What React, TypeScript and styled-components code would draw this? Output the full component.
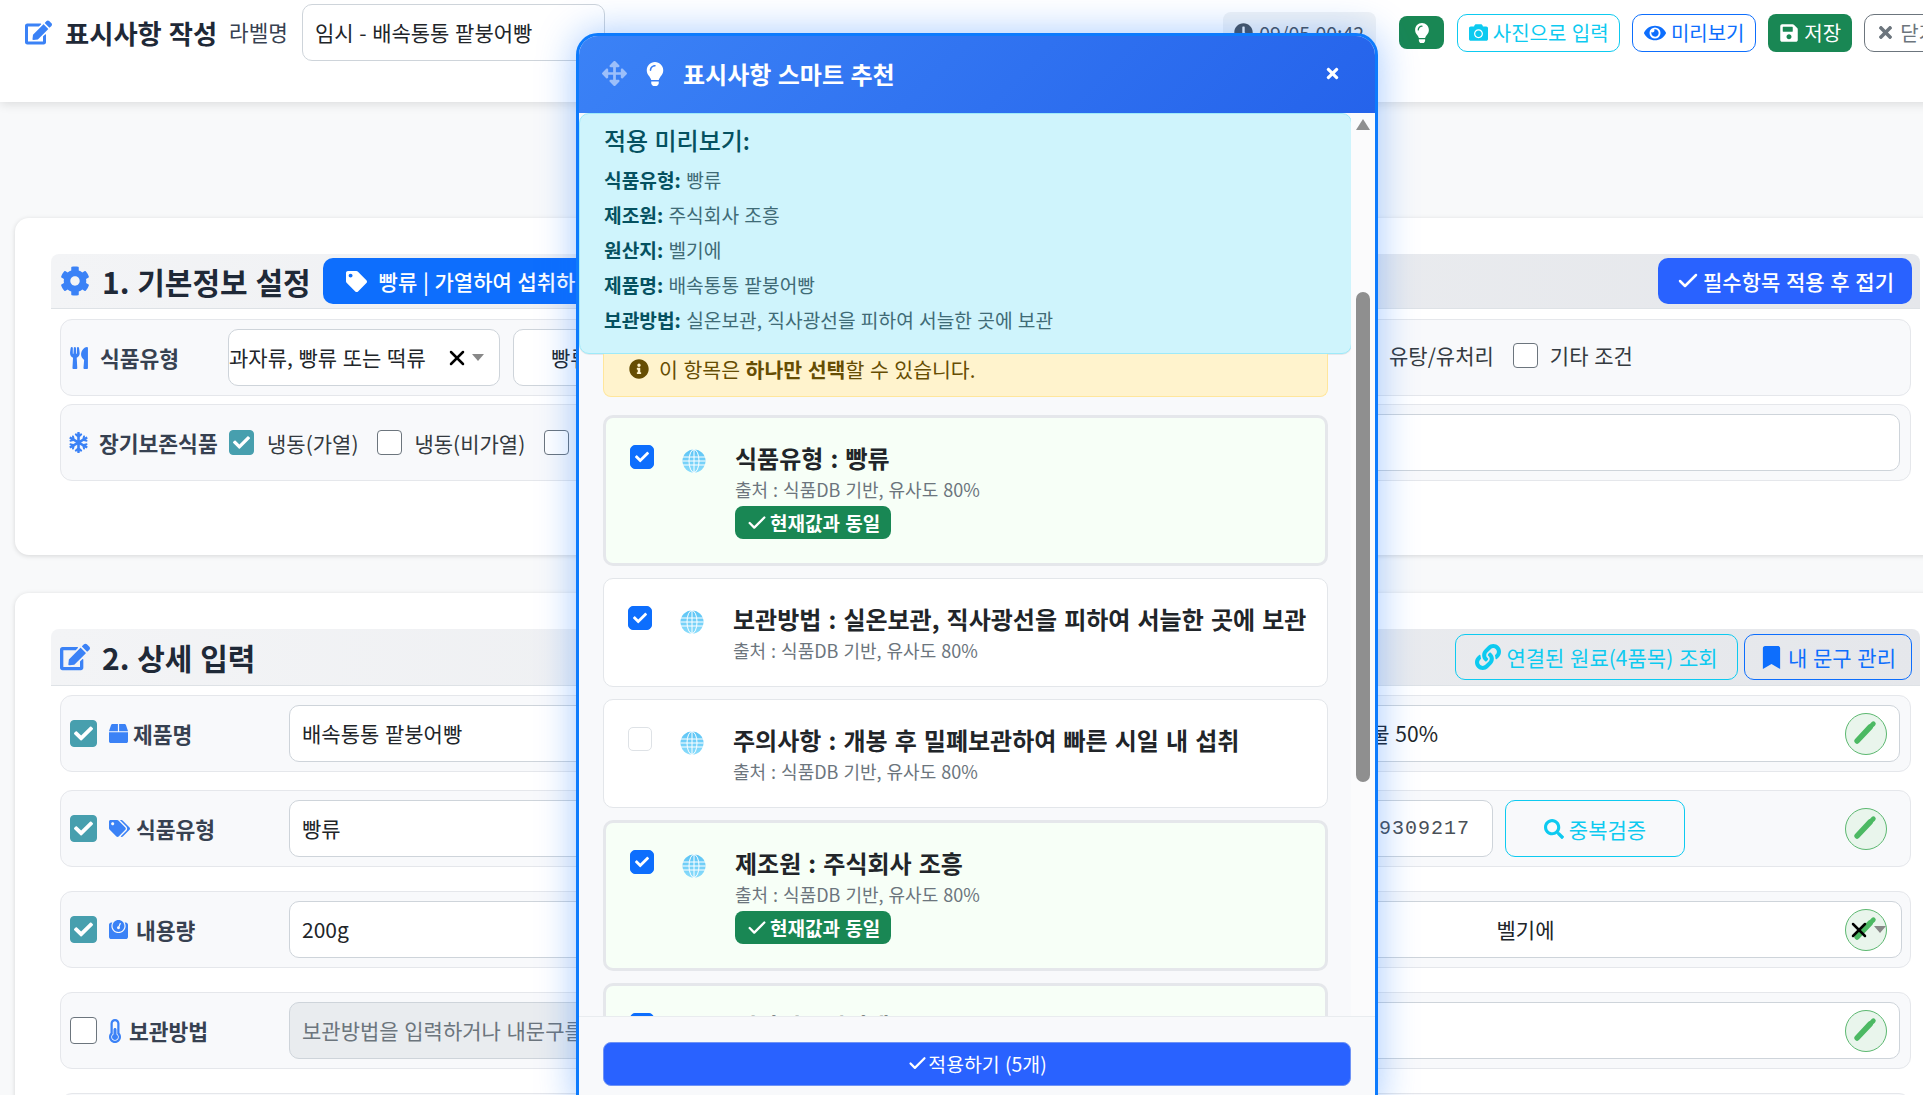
import React from 'react'
import styled, { createGlobalStyle } from 'styled-components'
import { Check as CheckMark, X } from 'lucide-react'
import {
  FaArrowsAlt, FaBookmark, FaBox, FaCamera, FaCheck, FaClock, FaCog, FaEdit, FaEye, FaInfoCircle,
  FaLightbulb, FaLink, FaSave, FaSearch, FaSnowflake, FaTag, FaTags, FaThermometerHalf, FaTimes,
  FaUtensils, FaWeight,
} from 'react-icons/fa'

const GlobalStyle = createGlobalStyle`
  html, body {
    margin: 0;
    width: 1923px;
    height: 1095px;
    overflow: hidden;
    background: #f8f9fa;
    font-family: "Noto Sans CJK KR", "Noto Sans", sans-serif;
    color: #212529;
    word-spacing: 0.06em;
  }
  button { word-spacing: inherit; }
  * { box-sizing: border-box; }
`

const Page = styled.div`
  position: relative;
  width: 1923px;
  height: 1095px;
  overflow: hidden;
`

const Header = styled.header`
  display: flex;
  align-items: flex-start;
  width: 1965px;
  height: 102px;
  padding: 4px 16px 0 25px;
  background: #fff;
  box-shadow: 0 2px 10px rgba(0, 0, 0, 0.12);
`

const PageTitle = styled.h1`
  display: flex;
  align-items: center;
  gap: 13px;
  height: 57px;
  margin: 0 12px 0 0;
  font-size: 26.3px;
  font-weight: 700;
  color: #1f2937;
  white-space: nowrap;
  svg { color: #3b82f6; font-size: 27px; }
`

const HeaderLabel = styled.span`
  height: 57px;
  line-height: 55px;
  margin-right: 14px;
  font-size: 21.3px;
  color: #374151;
`

const NameBox = styled.div`
  width: 303px;
  height: 57px;
  line-height: 55px;
  padding-left: 12px;
  border: 1px solid #ced4da;
  border-radius: 10px;
  font-size: 21px;
  background: #fff;
`

const HeaderActions = styled.div`
  display: flex;
  align-items: center;
  gap: 12px;
  margin-left: auto;
  padding-top: 9px;
`

const TimeChip = styled.div`
  display: flex;
  align-items: center;
  gap: 6px;
  width: 153px;
  height: 40px;
  margin: -1px 11px 0 0;
  padding-left: 11px;
  border-radius: 8px;
  background: #f1f3f5;
  font-size: 19.5px;
  color: #495057;
  svg { font-size: 19px; }
`

const tones: Record<string, string> = {
  info: '#0dcaf0',
  primary: '#0d6efd',
  gray: '#6c757d',
}

const OutlineButton = styled.button<{ $tone: string; $w?: number; $h?: number; $font?: number; $icon?: number }>`
  display: inline-flex;
  align-items: center;
  justify-content: center;
  gap: 5px;
  flex: none;
  width: ${p => (p.$w ? `${p.$w}px` : 'auto')};
  height: ${p => p.$h || 38}px;
  padding: 0 11px;
  border: 1px solid ${p => tones[p.$tone]};
  border-radius: 10px;
  background: transparent;
  color: ${p => tones[p.$tone]};
  font-family: inherit;
  font-size: ${p => p.$font || 20}px;
  white-space: nowrap;
  svg { font-size: ${p => p.$icon || 19}px; flex: none; }
`

const DupButton = styled(OutlineButton)`
  margin: 0 215px 0 12px;
`

const SaveButton = styled.button<{ $square?: boolean }>`
  display: inline-flex;
  align-items: center;
  justify-content: center;
  gap: 5px;
  flex: none;
  width: ${p => (p.$square ? '45px' : '84px')};
  height: ${p => (p.$square ? '33px' : '38px')};
  margin-right: ${p => (p.$square ? '1px' : '0')};
  padding: 0;
  border: none;
  border-radius: 8px;
  background: #198754;
  color: #fff;
  font-family: inherit;
  font-size: 20px;
`

const Main = styled.main`
  width: 1956px;
  padding: 116px 0 0 15px;
`

const Section = styled.section<{ $bottom: number }>`
  width: 1941px;
  padding: 36px 36px ${p => p.$bottom}px;
  margin-bottom: 38px;
  border-radius: 14px;
  background: #fff;
  box-shadow: 0 1px 5px rgba(0, 0, 0, 0.14);
`

const SectionHead = styled.div<{ $h: number; $gap: number }>`
  display: flex;
  align-items: center;
  gap: 12px;
  height: ${p => p.$h}px;
  margin-bottom: ${p => p.$gap}px;
  padding: 0 8px 0 9px;
  border-bottom: 1px solid #dee2e6;
  border-radius: 8px 8px 0 0;
  background: linear-gradient(90deg, #f3f4f6, #e5e7eb);
`

const SectionTitle = styled.h2`
  display: flex;
  align-items: center;
  gap: 12px;
  margin: 0;
  font-size: 30px;
  font-weight: 700;
  color: #1f2937;
  white-space: nowrap;
  svg { color: #3b82f6; font-size: 30px; }
`

const SolidButton = styled.button<{ $color: string; $w: number; $gap: number }>`
  display: inline-flex;
  align-items: center;
  justify-content: ${p => (p.$w > 300 ? 'flex-start' : 'center')};
  gap: ${p => p.$gap}px;
  flex: none;
  width: ${p => p.$w}px;
  height: 46px;
  padding: 0 ${p => (p.$w > 300 ? 23 : 0)}px;
  border: none;
  border-radius: 10px;
  background: ${p => p.$color};
  color: #fff;
  font-family: inherit;
  font-size: 21px;
  font-weight: 500;
  white-space: nowrap;
`

const HeadRight = styled.div`
  display: flex;
  align-items: center;
  gap: 6px;
  margin-left: auto;
`

const Row = styled.div<{ $gap?: number }>`
  position: relative;
  display: flex;
  align-items: center;
  height: 77px;
  margin: 0 9px ${p => p.$gap ?? 8}px;
  padding: 0 10px 0 9px;
  border: 1px solid #e5e7eb;
  border-radius: 12px;
  background: #f8f9fb;
`

const RowLabel = styled.div<{ $w: number; $gap?: number; $icon?: number; $ml?: number }>`
  display: flex;
  align-items: center;
  gap: ${p => p.$gap ?? 9}px;
  flex: none;
  width: ${p => p.$w}px;
  margin-left: ${p => p.$ml || 0}px;
  font-size: 21.5px;
  font-weight: 700;
  color: #374151;
  white-space: nowrap;
  svg { color: #3b82f6; font-size: ${p => p.$icon || 19}px; flex: none; }
`

const Check = styled.span<{ $on?: boolean; $size?: number; $ml?: number }>`
  display: inline-flex;
  align-items: center;
  justify-content: center;
  flex: none;
  width: ${p => p.$size || 25}px;
  height: ${p => p.$size || 25}px;
  margin-left: ${p => p.$ml || 0}px;
  border: 1px solid ${p => (p.$on ? '#479fae' : '#6c757d')};
  border-radius: 4px;
  background: ${p => (p.$on ? '#479fae' : '#fff')};
  color: #fff;
  font-size: ${p => (p.$size || 25) - 8}px;
`

const RowCheck = styled(Check)`
  margin-right: 12px;
`

const Field = styled.div<{ $w?: number; $align?: string; $pad?: number; $left?: number; $ml?: number; $muted?: boolean }>`
  flex: ${p => (p.$w ? 'none' : '1')};
  width: ${p => (p.$w ? `${p.$w}px` : 'auto')};
  height: 57px;
  line-height: 55px;
  margin-left: ${p => p.$ml || 0}px;
  padding: 0 ${p => p.$pad ?? 12}px 0 ${p => p.$left ?? 12}px;
  border: 1px solid #ced4da;
  border-radius: 10px;
  background: ${p => (p.$muted ? '#e9ecef' : '#fff')};
  color: ${p => (p.$muted ? '#6c757d' : '#212529')};
  font-size: 21px;
  text-align: ${p => p.$align || 'left'};
  white-space: nowrap;
  overflow: hidden;
`

const NumberField = styled(Field)`
  font-family: "Liberation Mono", monospace;
  font-size: 20px;
  letter-spacing: 1px;
  color: #495057;
`

const SelectBox = styled.div<{ $w: number; $center?: boolean }>`
  position: relative;
  flex: none;
  width: ${p => p.$w}px;
  height: 57px;
  line-height: 55px;
  border: 1px solid #ced4da;
  border-radius: 10px;
  background: #fff;
  font-size: 21px;
  white-space: nowrap;
  text-align: ${p => (p.$center ? 'center' : 'left')};
`

const SelectClear = styled.span`
  position: absolute;
  z-index: 1;
  right: 30px;
  top: 16px;
  display: flex;
  color: #000;
`

const SelectCaret = styled.span`
  position: absolute;
  z-index: 1;
  right: 15px;
  top: 24px;
  border-left: 6px solid transparent;
  border-right: 6px solid transparent;
  border-top: 7px solid #888;
`

const OptionGroup = styled.div`
  display: flex;
  align-items: center;
  margin-bottom: 5px;
`

const OptionLabel = styled.span<{ $ml?: number }>`
  margin: 0 19px 0 ${p => p.$ml ?? 13}px;
  font-size: 21px;
  color: #343a40;
  white-space: nowrap;
`

const PencilButton = styled.span`
  position: absolute;
  right: 23px;
  top: 17px;
  width: 42px;
  height: 42px;
  border: 1.5px solid #5cb870;
  border-radius: 50%;
  background: #e9f5ec;
`

/* the floating dialog */
const Modal = styled.div`
  position: absolute;
  left: 576px;
  top: 33px;
  display: flex;
  flex-direction: column;
  width: 802px;
  height: 1075px;
  border: 3px solid #0d7bfd;
  border-radius: 22px 22px 0 0;
  background: #f8f9fb;
  box-shadow: 0 0 38px rgba(13, 110, 253, 0.38);
  overflow: hidden;
`

const ModalHead = styled.div`
  display: flex;
  align-items: center;
  flex: none;
  height: 77px;
  padding: 0 34px 2px 23px;
  background: linear-gradient(135deg, #3b82f6, #2563eb);
  color: #fff;
`

const MoveIcon = styled(FaArrowsAlt)`
  font-size: 25px;
  opacity: 0.5;
  margin-right: 16px;
`

const ModalTitle = styled.h3`
  display: flex;
  align-items: center;
  gap: 16px;
  margin: 0;
  font-size: 24px;
  font-weight: 700;
  svg { font-size: 24px; }
`

const ModalClose = styled(FaTimes)`
  margin-left: auto;
  font-size: 17px;
`

const ModalBody = styled.div`
  position: relative;
  flex: 1;
  overflow: hidden;
`

const Preview = styled.div`
  width: 773px;
  height: 241px;
  padding: 8px 24px 0;
  border: 1px solid #9eeaf9;
  border-radius: 10px;
  background: #cff4fc;
  color: #055160;
  box-shadow: 0 1px 0 #e5e7eb;
`

const PreviewTitle = styled.h5`
  margin: 0 0 6px;
  font-size: 24px;
  line-height: 35px;
  font-weight: 500;
`

const PreviewLine = styled.div`
  height: 35px;
  line-height: 35px;
  font-size: 19.2px;
  white-space: nowrap;
  color: #3f6b76;
  b { font-weight: 700; color: #055160; }
`

const Notice = styled.div`
  display: flex;
  align-items: center;
  gap: 10px;
  width: 725px;
  height: 43px;
  margin: 0 0 18px 24px;
  padding: 0 0 12px 25px;
  border: 1px solid #ffe69c;
  border-top: none;
  border-radius: 0 0 8px 8px;
  background: #fff3cd;
  color: #664d03;
  font-size: 20.5px;
  b { font-weight: 700; }
  svg { font-size: 20px; flex: none; }
`

const Card = styled.div<{ $same?: boolean }>`
  display: flex;
  align-items: flex-start;
  gap: 28px;
  width: 725px;
  margin: 0 0 12px 24px;
  padding: 22px 24px;
  border: ${p => (p.$same ? '3px' : '1px')} solid ${p => (p.$same ? '#e5e7eb' : '#e3e6ea')};
  border-radius: 10px;
  background: ${p => (p.$same ? '#f7fff7' : '#fff')};
`

const CardCheck = styled.span<{ $on?: boolean }>`
  display: inline-flex;
  align-items: center;
  justify-content: center;
  flex: none;
  width: 24px;
  height: 24px;
  margin-top: 5px;
  border: 1px solid ${p => (p.$on ? '#0d6efd' : '#dee2e6')};
  border-radius: 5px;
  background: ${p => (p.$on ? '#0d6efd' : '#fff')};
  color: #fff;
  font-size: 14px;
`

const Globe = styled.svg`
  flex: none;
  width: 24px;
  height: 24px;
  margin-top: 9px;
`

const CardText = styled.div`
  margin-left: 1px;
  min-width: 0;
`

const CardTitle = styled.div`
  height: 36px;
  line-height: 36px;
  font-size: 24px;
  font-weight: 700;
  color: #212529;
  white-space: nowrap;
  word-spacing: 0.07em;
`

const CardSource = styled.div`
  height: 27px;
  line-height: 27px;
  font-size: 18px;
  color: #6c757d;
  white-space: nowrap;
`

const SameBadge = styled.span`
  display: inline-flex;
  align-items: center;
  gap: 2px;
  height: 33px;
  margin: 3px 0 2px;
  padding: 0 11px;
  border-radius: 8px;
  background: #198754;
  color: #fff;
  font-size: 19px;
  font-weight: 700;
`

const ScrollTrack = styled.div`
  position: absolute;
  right: 0;
  top: 0;
  bottom: 0;
  width: 24px;
  background: #fbfbfc;
`

const ScrollArrow = styled.span`
  position: absolute;
  left: 5px;
  top: 6px;
  border-left: 7px solid transparent;
  border-right: 7px solid transparent;
  border-top: 0;
  border-bottom: 11px solid #8f8f8f;
`

const ScrollThumb = styled.span`
  position: absolute;
  left: 5px;
  top: 179px;
  width: 14px;
  height: 490px;
  border-radius: 7px;
  background: #8f8f8f;
`

const ModalFoot = styled.div`
  position: absolute;
  left: 0;
  right: 0;
  top: 903px;
  bottom: 0;
  padding: 25px 24px 0;
  border-top: 1px solid #e9ecef;
  background: #f8f9fb;
`

const ApplyButton = styled.button`
  display: flex;
  align-items: center;
  justify-content: center;
  gap: 0;
  width: 748px;
  height: 44px;
  padding-bottom: 3px;
  border: 1px solid #6f93f5;
  border-radius: 8px;
  background: #2962ff;
  color: #fff;
  font-family: inherit;
  font-size: 19.4px;
`

const Pencil = () => (
  <PencilButton>
    <svg viewBox="0 0 42 42" width="39" height="39">
      <path d="M12 29 L26 14" stroke="#4cb963" strokeWidth="6" strokeLinecap="round" />
      <path d="M27.5 12.5 L29.5 10.5" stroke="#4cb963" strokeWidth="5" strokeLinecap="round" />
    </svg>
  </PencilButton>
)

const GlobeIcon = ({ id }: { id: string }) => (
  <Globe viewBox="0 0 24 24">
    <defs>
      <linearGradient id={id} x1="0" y1="0" x2="0" y2="1">
        <stop offset="0" stopColor="#5cc4f5" />
        <stop offset="1" stopColor="#8adcfb" />
      </linearGradient>
    </defs>
    <circle cx="12" cy="12" r="11.5" fill={`url(#${id})`} />
    <g fill="none" stroke="#fff" strokeWidth="1">
      <ellipse cx="12" cy="12" rx="5" ry="11.5" />
      <path d="M12 .5 V23.5 M1 8 H23 M1 16 H23 M.5 12 H23.5" />
    </g>
  </Globe>
)

const previewLines = [
  ['식품유형:', '빵류'],
  ['제조원:', '주식회사 조흥'],
  ['원산지:', '벨기에'],
  ['제품명:', '배속통통 팥붕어빵'],
  ['보관방법:', '실온보관, 직사광선을 피하여 서늘한 곳에 보관'],
]

const suggestions = [
  { title: '식품유형 : 빵류', on: true, same: true },
  { title: '보관방법 : 실온보관, 직사광선을 피하여 서늘한 곳에 보관', on: true, same: false },
  { title: '주의사항 : 개봉 후 밀폐보관하여 빠른 시일 내 섭취', on: false, same: false },
  { title: '제조원 : 주식회사 조흥', on: true, same: true },
  { title: '원산지 : 벨기에', on: true, same: true },
]

export default function App() {
  return (
    <Page>
      <GlobalStyle />
      <Header>
        <PageTitle><FaEdit />표시사항 작성</PageTitle>
        <HeaderLabel>라벨명</HeaderLabel>
        <NameBox>임시 - 배속통통 팥붕어빵</NameBox>
        <HeaderActions>
          <TimeChip><FaClock />09/05 00:42</TimeChip>
          <SaveButton $square><FaLightbulb /></SaveButton>
          <OutlineButton $tone="info" $w={163}><FaCamera />사진으로 입력</OutlineButton>
          <OutlineButton $tone="primary" $w={124} $icon={22}><FaEye />미리보기</OutlineButton>
          <SaveButton><FaSave />저장</SaveButton>
          <OutlineButton $tone="gray"><FaTimes />닫기</OutlineButton>
        </HeaderActions>
      </Header>

      <Main>
        <Section $bottom={66}>
          <SectionHead $h={55} $gap={10}>
            <SectionTitle><FaCog />1. 기본정보 설정</SectionTitle>
            <SolidButton $color="#0d6efd" $w={560} $gap={12}><FaTag />빵류 | 가열하여 섭취하는 식품</SolidButton>
            <HeadRight>
              <SolidButton $color="#2962ff" $w={254} $gap={3}><CheckMark size={24} strokeWidth={2.5} />필수항목 적용 후 접기</SolidButton>
            </HeadRight>
          </SectionHead>
          <Row>
            <RowLabel $w={160} $ml={-2} $gap={10} $icon={22}><FaUtensils />식품유형</RowLabel>
            <SelectBox $w={272}>
              과자류, 빵류 또는 떡류
              <SelectClear><X size={24} strokeWidth={2.5} /></SelectClear>
              <SelectCaret />
            </SelectBox>
            <Field $w={818} $ml={13} $left={37}>빵류</Field>
            <OptionGroup>
              <Check $ml={20} />
              <OptionLabel>유탕/유처리</OptionLabel>
              <Check />
              <OptionLabel $ml={12}>기타 조건</OptionLabel>
            </OptionGroup>
          </Row>
          <Row>
            <RowLabel $w={161} $ml={-2} $gap={10} $icon={21}><FaSnowflake />장기보존식품</RowLabel>
            <Check $on><FaCheck /></Check>
            <OptionLabel>냉동(가열)</OptionLabel>
            <Check />
            <OptionLabel $ml={12}>냉동(비가열)</OptionLabel>
            <Check />
            <Field $ml={20} />
          </Row>
        </Section>

        <Section $bottom={75}>
          <SectionHead $h={57} $gap={9}>
            <SectionTitle><FaEdit />2. 상세 입력</SectionTitle>
            <HeadRight>
              <OutlineButton $tone="info" $w={283} $h={46} $font={21} $icon={26}><FaLink />연결된 원료(4품목) 조회</OutlineButton>
              <OutlineButton $tone="primary" $w={168} $h={46} $font={21} $icon={23}><FaBookmark />내 문구 관리</OutlineButton>
            </HeadRight>
          </SectionHead>
          <Row $gap={18}>
            <RowCheck $on $size={27}><FaCheck /></RowCheck>
            <RowLabel $w={180} $gap={5}><FaBox />제품명</RowLabel>
            <Field $w={860}>배속통통 팥붕어빵</Field>
            <Field $align="right" $pad={461}>물 50%</Field>
            <Pencil />
          </Row>
          <Row $gap={24}>
            <RowCheck $on $size={27}><FaCheck /></RowCheck>
            <RowLabel $w={180} $gap={6} $icon={21}><FaTags />식품유형</RowLabel>
            <Field $w={701}>빵류</Field>
            <NumberField $align="right" $pad={22}>202300409309217</NumberField>
            <DupButton $tone="info" $w={180} $h={57} $font={21} $icon={20}>
              <FaSearch />중복검증
            </DupButton>
            <Pencil />
          </Row>
          <Row $gap={24}>
            <RowCheck $on $size={27}><FaCheck /></RowCheck>
            <RowLabel $w={180} $gap={8}><FaWeight />내용량</RowLabel>
            <Field $w={860}>200g</Field>
            <SelectBox $w={753} $center>
              벨기에
              <SelectClear><X size={24} strokeWidth={2.5} /></SelectClear>
              <SelectCaret />
            </SelectBox>
            <Pencil />
          </Row>
          <Row $gap={24}>
            <RowCheck $size={27} />
            <RowLabel $w={186} $ml={-6} $gap={2} $icon={24}><FaThermometerHalf />보관방법</RowLabel>
            <Field $w={860} $muted>보관방법을 입력하거나 내문구를 선택하세요</Field>
            <Field />
            <Pencil />
          </Row>
          <Row />
        </Section>
      </Main>

      <Modal>
        <ModalHead>
          <MoveIcon />
          <ModalTitle><FaLightbulb />표시사항 스마트 추천</ModalTitle>
          <ModalClose />
        </ModalHead>
        <ModalBody>
          <Preview>
            <PreviewTitle>적용 미리보기:</PreviewTitle>
            {previewLines.map(([k, v]) => (
              <PreviewLine key={k}><b>{k}</b> {v}</PreviewLine>
            ))}
          </Preview>
          <Notice>
            <FaInfoCircle />
            <span>이 항목은 <b>하나만 선택</b>할 수 있습니다.</span>
          </Notice>
          {suggestions.map((s, i) => (
            <Card key={s.title} $same={s.same}>
              <CardCheck $on={s.on}>{s.on && <FaCheck />}</CardCheck>
              <GlobeIcon id={`globe-${i}`} />
              <CardText>
                <CardTitle>{s.title}</CardTitle>
                <CardSource>출처 : 식품DB 기반, 유사도 80%</CardSource>
                {s.same && <SameBadge><CheckMark size={22} strokeWidth={2.5} />현재값과 동일</SameBadge>}
              </CardText>
            </Card>
          ))}
          <ScrollTrack>
            <ScrollArrow />
            <ScrollThumb />
          </ScrollTrack>
          <ModalFoot>
            <ApplyButton><CheckMark size={21} strokeWidth={2.5} />적용하기 (5개)</ApplyButton>
          </ModalFoot>
        </ModalBody>
      </Modal>
    </Page>
  )
}
